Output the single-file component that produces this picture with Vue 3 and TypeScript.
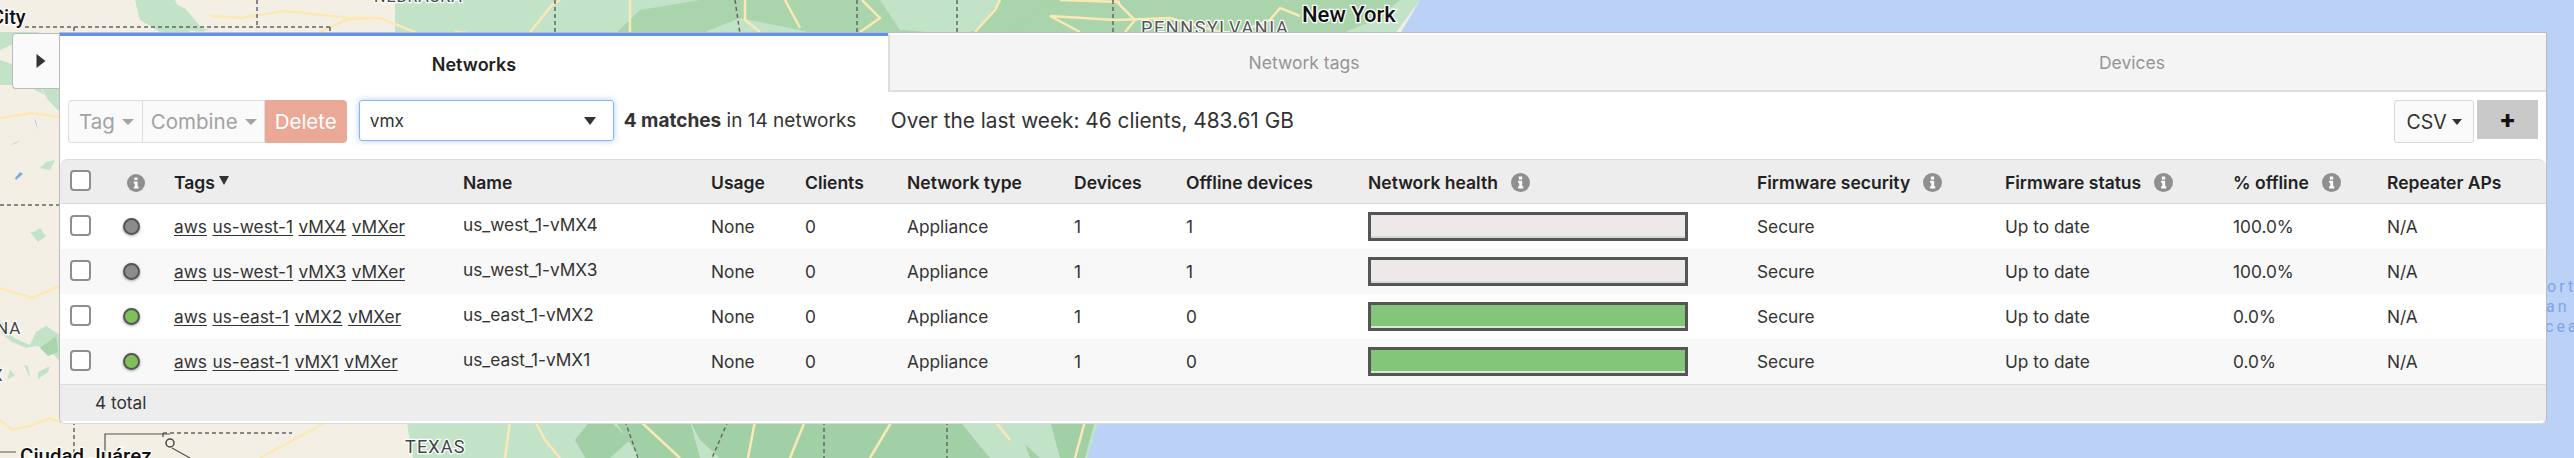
<template>
  <div class="page">
    <!-- map behind the panel -->
    <svg class="map" viewBox="0 0 2574 458" width="2574" height="458">
      <rect width="2574" height="458" fill="#f3efe4" />
      <path d="M395 0H1420L1395 34L1320 120V400L1120 420L1087 458H413L408 430L395 300Z" fill="#c3e3c9" />
      <path d="M1420 0H2574V458H1087L1097 425L1105 421L1400 300L1400 34Z" fill="#bcd1f6" />
      <path d="M615 34L640 10L700 0H1400L1375 20L1340 34Z" fill="#a9d4ac" />
      <path d="M700 34L740 18L800 30L815 34Z M880 0L1000 0L1020 20L960 34L900 30Z" fill="#c3e3c9" />
      <path d="M1010 34L1040 8L1080 0H1000L975 34Z" fill="#a9d4ac" />
      <path d="M615 421L640 458H700L690 421Z M690 421L700 440L720 458H1085L1095 421Z M590 421L575 440L585 458H610L630 440L610 421Z" fill="#a2d0a6" />
      <path d="M960 421L975 440L990 458H1030L1020 430L1010 421Z M1000 421L1040 458H1060L1050 421Z" fill="#c3e3c9" />
      <path d="M135 0L175 0L190 32H160L140 20Z M165 0L185 8L205 32L170 28Z M195 26L210 30L195 32Z M0 50L22 40L40 32H0Z M0 60L30 70L45 95L25 85L0 85Z M42 88L60 84V112L48 100Z" fill="#c3e3c9" />
      <path d="M0 320L14 338L30 345L36 332L46 326L60 335V362L50 350L36 346L26 348L12 342L0 332Z M38 379L48 372L50 366L38 372Z M24 365L30 378L28 366Z M7 380L15 375L10 370Z M30 232L38 242L46 236L40 228L34 232Z M40 168L50 170L55 160L46 162Z" fill="#c3e3c9" />
      <path d="M40 348L56 336L58 352L48 356Z" fill="#a9d4ac" />
      <g fill="none" stroke="#fbe9b5" stroke-width="2.5">
        <path d="M0 118L32 113L60 117" />
        <path d="M0 288L32 298L60 286" />
        <path d="M0 420L12 430L30 426L50 418L60 422" />
        <path d="M210 16L240 18L285 11L350 18L380 18L415 32" />
        <path d="M320 32L345 20L370 18" />
        <path d="M455 32L525 38L535 26L552 5L560 0" />
        <path d="M630 0V32M760 32L745 20V0M785 0L800 28M860 32L880 18L862 0M975 32L995 10L1000 0M1080 32L1050 16L1115 20L1170 18L1220 32" />
        <path d="M1060 0L1120 2M1115 0L1135 20L1125 32M1240 32L1270 20L1280 8L1300 16" />
        <path d="M260 458L330 420M510 421L505 458M535 421L545 440L560 458M640 421L680 458M755 421L748 458M805 421L790 458M892 421L870 458M995 421L1010 440M1085 421L1075 458" />
      </g>
      <g fill="none" stroke="#666" stroke-width="1.5" stroke-dasharray="4 3">
        <path d="M25 27H330M74 27V34M330 27V34M257 0V27M555 0V32M735 0L740 34M857 0V34M957 0V34M1113 0V34" />
        <path d="M0 205H60M74 421V458M163 433H292M163 433V438M625 421L638 458M728 421L712 458M824 421V458M947 421V458" />
      </g>
      <path d="M0 452H16M105 458V434H170M172 448L190 458" fill="none" stroke="#555" stroke-width="1.2" />
      <circle cx="170" cy="443" r="4" fill="none" stroke="#444" stroke-width="1.5" />
      <g fill="#7fa8e8"><path d="M16 143L20 140L10 146Z M36 122L38 130L34 118Z M16 180L23 174L20 172L15 178Z" /></g>

      <g class="label">
        <text x="-9" y="24" font-size="20" font-weight="500" fill="#111">City</text>
        <text x="-6" y="115" font-size="17" font-weight="500" fill="#333">I</text>
        <text x="-4" y="334" font-size="17" letter-spacing="1" fill="#444">NA</text>
        <text x="-8" y="381" font-size="17" letter-spacing="1" fill="#444">X</text>
        <text x="374" y="2" font-size="16" letter-spacing="1" fill="#444">NEBRASKA</text>
        <text x="1141" y="34" font-size="18" letter-spacing="1.6" fill="#555">PENNSYLVANIA</text>
        <text x="1302" y="22" font-size="22" font-weight="500" fill="#111">New York</text>
        <text x="405" y="453" font-size="18" letter-spacing="1.2" fill="#444">TEXAS</text>
        <text x="20" y="463" font-size="20.5" font-weight="500" fill="#111">Ciudad Juárez</text>
      </g>
      <g class="ocean" font-size="16" letter-spacing="3" fill="#7fa3ea">
        <text x="2547" y="292">ort</text>
        <text x="2546" y="312">an</text>
        <text x="2545" y="332">cea</text>
      </g>
    </svg>

    <button class="toggle">
      <svg viewBox="0 0 10 14" width="10" height="14"><path d="M0.5 0L9.5 7L0.5 14Z" fill="#333" /></svg>
    </button>

    <div class="panel">
      <div class="tabs">
        <div v-for="(tab, i) in tabs" :key="tab" class="tab" :class="{ active: i === 0 }">{{ tab }}</div>
      </div>

      <div class="toolbar">
        <div class="actions">
          <button class="btn">Tag <i class="caret" /></button>
          <button class="btn">Combine <i class="caret" /></button>
          <button class="btn danger">Delete</button>
        </div>
        <div class="search">
          <span>vmx</span>
          <i class="caret dark" />
        </div>
        <div class="matches"><strong>4 matches</strong> in 14 networks</div>
        <div class="summary">Over the last week: 46 clients, 483.61 GB</div>
        <div class="right-tools">
          <button class="csv">CSV <i class="caret dark small" /></button>
          <button class="plus">+</button>
        </div>
      </div>

      <div class="table">
        <div class="row head">
          <div class="cell"><span class="check" /></div>
          <div class="cell info-col">
            <svg class="info" viewBox="0 0 18 18"><circle cx="9" cy="9" r="9" fill="#8f8f8f" /><path d="M7.4 3.4h3.2v2.7H7.4ZM6.8 7.4h3.8v5.2h1v2H6.8v-2h1v-3.2h-1Z" fill="#fff" /></svg>
          </div>
          <div v-for="col in columns" :key="col.label" class="cell">
            {{ col.label }}
            <i v-if="col.sorted" class="sort" />
            <svg v-if="col.info" class="info gap" viewBox="0 0 18 18"><circle cx="9" cy="9" r="9" fill="#8f8f8f" /><path d="M7.4 3.4h3.2v2.7H7.4ZM6.8 7.4h3.8v5.2h1v2H6.8v-2h1v-3.2h-1Z" fill="#fff" /></svg>
          </div>
        </div>

        <div v-for="net in networks" :key="net.name" class="row body">
          <div class="cell"><span class="check" /></div>
          <div class="cell"><span class="dot" :class="{ up: net.online }" /></div>
          <div class="cell tags">
            <a v-for="tag in net.tags" :key="tag">{{ tag }}</a>
          </div>
          <div class="cell name">{{ net.name }}</div>
          <div class="cell">None</div>
          <div class="cell">0</div>
          <div class="cell">Appliance</div>
          <div class="cell">1</div>
          <div class="cell">{{ net.online ? 0 : 1 }}</div>
          <div class="cell"><div class="health" :class="{ up: net.online }" /></div>
          <div class="cell">Secure</div>
          <div class="cell">Up to date</div>
          <div class="cell">{{ net.online ? '0.0%' : '100.0%' }}</div>
          <div class="cell">N/A</div>
        </div>

        <div class="footer">4 total</div>
      </div>
    </div>
  </div>
</template>

<script setup lang="ts">
interface Column {
  label: string;
  info?: boolean;
  sorted?: boolean;
}

interface Network {
  name: string;
  tags: string[];
  online: boolean;
}

const tabs = ['Networks', 'Network tags', 'Devices'];

const columns: Column[] = [
  { label: 'Tags', sorted: true },
  { label: 'Name' },
  { label: 'Usage' },
  { label: 'Clients' },
  { label: 'Network type' },
  { label: 'Devices' },
  { label: 'Offline devices' },
  { label: 'Network health', info: true },
  { label: 'Firmware security', info: true },
  { label: 'Firmware status', info: true },
  { label: '% offline', info: true },
  { label: 'Repeater APs' },
];

const networks: Network[] = [
  { name: 'us_west_1-vMX4', tags: ['aws', 'us-west-1', 'vMX4', 'vMXer'], online: false },
  { name: 'us_west_1-vMX3', tags: ['aws', 'us-west-1', 'vMX3', 'vMXer'], online: false },
  { name: 'us_east_1-vMX2', tags: ['aws', 'us-east-1', 'vMX2', 'vMXer'], online: true },
  { name: 'us_east_1-vMX1', tags: ['aws', 'us-east-1', 'vMX1', 'vMXer'], online: true },
];
</script>

<style>
html,
body {
  margin: 0;
  background: #bcd1f6;
}
</style>

<style scoped>
.page {
  position: relative;
  width: 2574px;
  height: 458px;
  overflow: hidden;
  padding: 32px 27px 0 59px;
  box-sizing: border-box;
  font-family: 'Inter', 'Liberation Sans', sans-serif;
  font-size: 17.3px;
  color: #333;
}

.map {
  position: absolute;
  top: 0;
  left: 0;
}

.map text {
  font-family: 'Roboto', 'Liberation Sans', sans-serif;
  paint-order: stroke;
  stroke: #fff;
  stroke-width: 2.5px;
}

.map .ocean text {
  stroke: none;
}

.toggle {
  position: absolute;
  top: 33px;
  left: 12px;
  width: 48px;
  height: 56px;
  padding: 0 0 0 9px;
  background: #fafafa;
  border: 1px solid #bbb;
  border-right: none;
  border-radius: 4px 0 0 4px;
  display: flex;
  align-items: center;
  justify-content: center;
}

.panel {
  position: relative;
  height: 390px;
  background: #fff;
  border: 1px solid #bcbcbc;
  border-bottom-color: #d8d8d8;
  border-radius: 0 0 6px 6px;
  overflow: hidden;
}

.tabs {
  display: flex;
  height: 59px;
}

.tab {
  flex: 1;
  display: flex;
  align-items: center;
  justify-content: center;
  background: #f4f4f4;
  color: #949494;
  font-size: 17.5px;
  border-top: 2px solid #fff;
  border-bottom: 2px solid #dedede;
}

.tab:nth-child(2) {
  border-left: 2px solid #dedede;
}

.tab.active {
  background: #fff;
  color: #222;
  font-size: 18px;
  font-weight: 600;
  border-top: 3px solid #5c95ef;
  border-bottom: none;
}

.toolbar {
  display: flex;
  align-items: flex-start;
  height: 67px;
  padding: 8px 8px 0 8px;
  box-sizing: border-box;
}

.actions {
  display: flex;
  height: 43px;
  margin-right: 12px;
}

.btn {
  display: flex;
  align-items: center;
  gap: 7px;
  height: 43px;
  padding: 0 7px 0 8px;
  background: #fafafa;
  border: 1px solid #dedede;
  color: #a2a2a2;
  font: inherit;
  font-size: 20.5px;
}

.btn:first-child {
  border-radius: 4px 0 0 4px;
  border-right: none;
  padding: 0 8px 0 10px;
}

.btn.danger {
  background: #eaa997;
  border-color: #eaa997;
  color: #fff;
  padding: 0 9px;
  border-radius: 0 4px 4px 0;
}

.caret {
  display: inline-block;
  width: 0;
  height: 0;
  border-left: 6px solid transparent;
  border-right: 6px solid transparent;
  border-top: 6px solid #a2a2a2;
}

.caret.dark {
  border-top-color: #333;
  border-left-width: 6.5px;
  border-right-width: 6.5px;
  border-top-width: 8px;
}

.caret.small {
  border-left-width: 5.5px;
  border-right-width: 5.5px;
  border-top-width: 6px;
}

.search {
  display: flex;
  align-items: center;
  justify-content: space-between;
  width: 255px;
  height: 41px;
  padding: 0 17px 0 10px;
  box-sizing: border-box;
  border: 1px solid #82b6f5;
  border-radius: 3px;
  box-shadow: 0 0 6px rgba(100, 160, 240, 0.5);
  margin-right: 10px;
  flex: none;
}

.matches {
  height: 41px;
  line-height: 41px;
  width: 267px;
  font-size: 19px;
  white-space: nowrap;
  flex: none;
}

.matches strong {
  font-weight: 700;
}

.summary {
  height: 41px;
  line-height: 41px;
  font-size: 20.8px;
  white-space: nowrap;
}

.right-tools {
  margin-left: auto;
  display: flex;
  gap: 3px;
}

.csv {
  display: flex;
  align-items: center;
  justify-content: center;
  gap: 5px;
  width: 80px;
  height: 43px;
  background: #fafafa;
  border: 1px solid #d8d8d8;
  border-radius: 3px;
  color: #333;
  font: inherit;
  font-size: 19.5px;
  padding: 0;
}

.plus {
  width: 61px;
  height: 39px;
  background: #c9c9c9;
  border: none;
  padding: 0;
  color: #111;
  font: inherit;
  font-size: 25px;
  font-weight: 800;
  line-height: 37px;
}

.table {
  display: flex;
  flex-direction: column;
}

.row {
  display: grid;
  grid-template-columns: 53px 51px 289px 248px 94px 102px 167px 112px 182px 389px 248px 228px 154px 1fr;
}

.cell {
  display: flex;
  align-items: center;
  padding-left: 10px;
  white-space: nowrap;
}

.cell:first-child {
  padding-bottom: 3px;
}

.head {
  height: 45px;
  box-sizing: border-box;
  background: #ededed;
  border-top: 1px solid #dcdcdc;
  border-bottom: 1px solid #dcdcdc;
  border-radius: 8px 8px 0 0;
  font-weight: 600;
  font-size: 17.5px;
  color: #222;
}

.head .cell {
  padding-top: 2px;
}

.head .cell:first-child {
  padding-top: 0;
}

.info-col {
  padding-left: 14px;
}

.body {
  height: 45px;
}

.body:nth-child(odd) {
  background: #f8f8f8;
}

.check {
  display: block;
  width: 21px;
  height: 21px;
  box-sizing: border-box;
  background: #fff;
  border: 2px solid #8e8e8e;
  border-radius: 4px;
  flex: none;
}

.info {
  display: block;
  width: 18px;
  height: 18px;
  flex: none;
}

.info.gap {
  margin-left: 13px;
  width: 19px;
  height: 19px;
}

.sort {
  display: inline-block;
  width: 0;
  height: 0;
  margin: 0 0 5px 4px;
  border-left: 5px solid transparent;
  border-right: 5px solid transparent;
  border-top: 9px solid #333;
}

.dot {
  display: block;
  width: 13px;
  height: 13px;
  background: #8c8c8c;
  border: 2px solid #555;
  border-radius: 50%;
  box-shadow: 0 1px 3px rgba(0, 0, 0, 0.35);
}

.dot.up {
  background: #80c05a;
}

.tags {
  gap: 5.5px;
}

.tags a {
  color: #333;
  text-decoration: underline;
  text-underline-offset: 2px;
}

.name {
  padding-bottom: 4px;
}

.health {
  width: 320px;
  height: 29px;
  box-sizing: border-box;
  border: 3px solid #555;
  background: #ede9e9;
  box-shadow: inset 0 -2px 0 #d8d8d8;
}

.health.up {
  background: #84c679;
  box-shadow: inset 0 -2px 0 #d6ecd2;
}

.footer {
  height: 37px;
  box-sizing: border-box;
  padding-left: 35px;
  background: #ededed;
  border-top: 1px solid #dcdcdc;
  line-height: 36px;
}
</style>
